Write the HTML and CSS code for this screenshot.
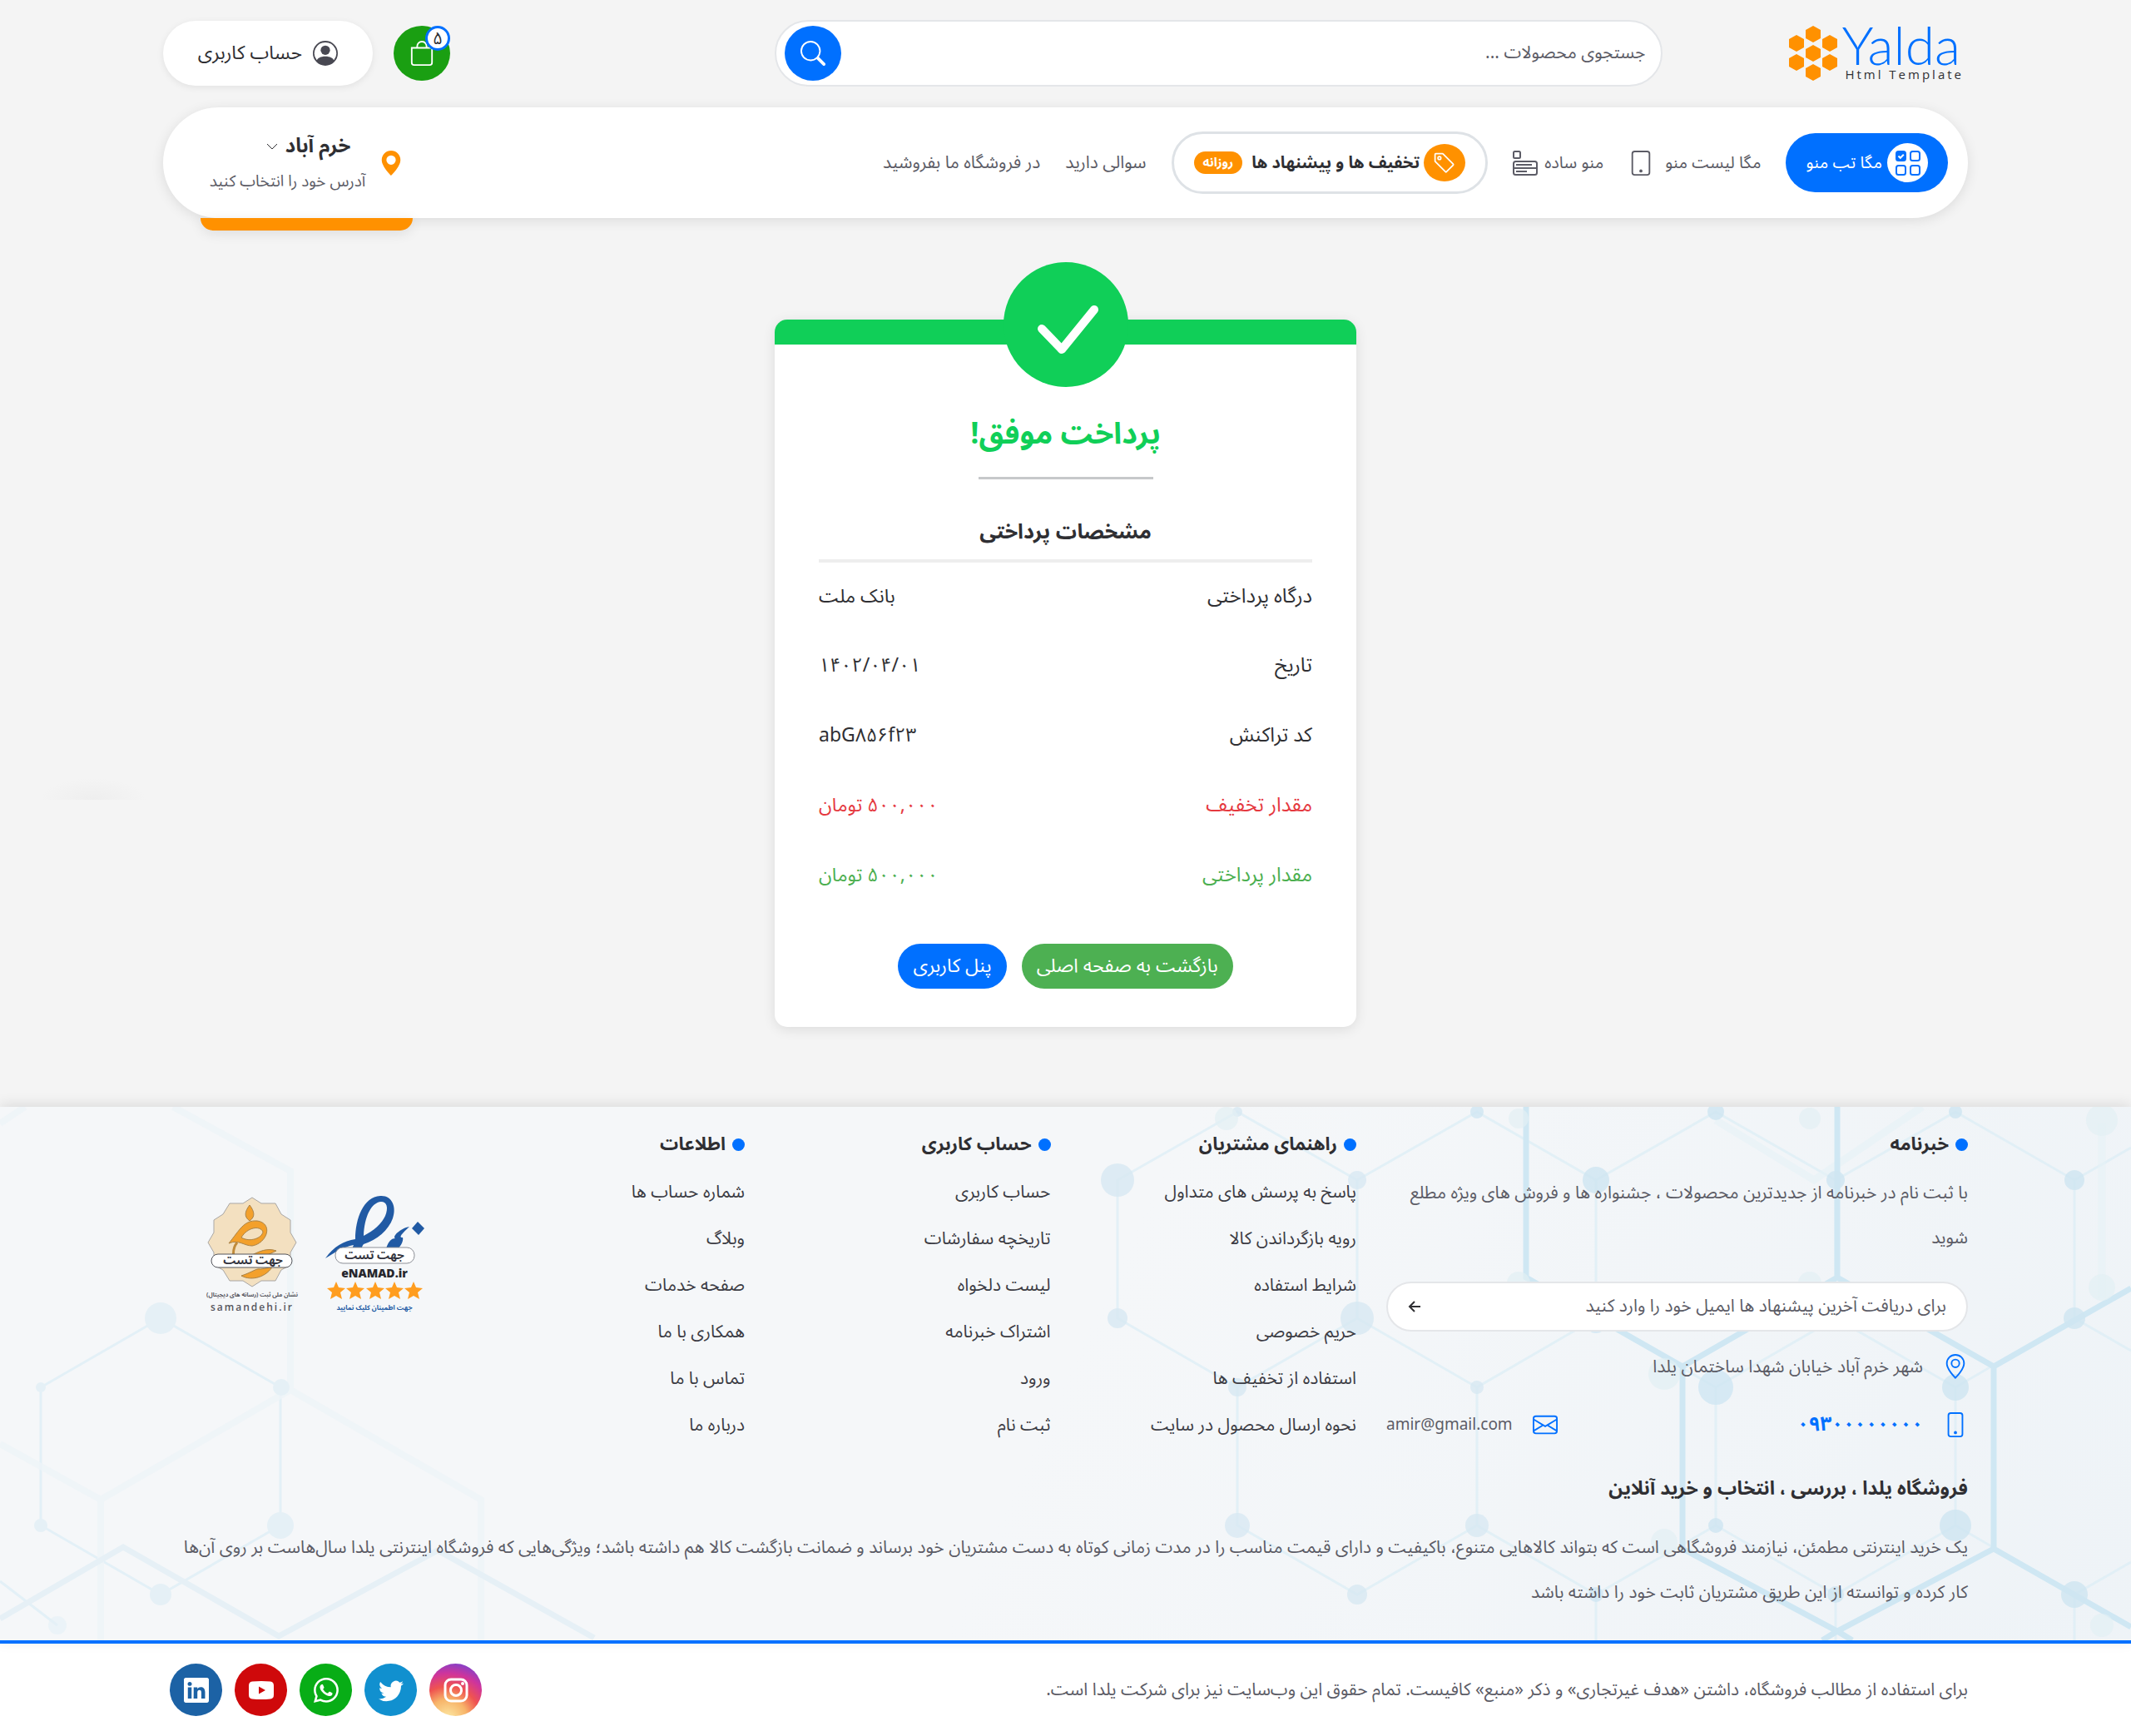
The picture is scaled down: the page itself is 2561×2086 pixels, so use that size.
FILE: index.html
```html
<!DOCTYPE html>
<html lang="fa" dir="rtl">
<head>
<meta charset="utf-8">
<meta name="viewport" content="width=device-width, initial-scale=1">
<title>یلدا | پرداخت موفق</title>
<link rel="stylesheet" href="styles.css">
</head>
<body>
<header class="container">
  <div class="topbar">
    <div class="cell cell-2">
      <a class="logo" href="#" dir="ltr" aria-label="Yalda Html Template">
        <svg class="logo-mark" viewBox="0 0 58 66" aria-hidden="true">
          <defs><path id="hex" d="M0-10 9-5V5L0 10-9 5V-5Z"/></defs>
          <g fill="#ff9100">
            <use href="#hex" x="29" y="10"/><use href="#hex" x="29" y="33"/><use href="#hex" x="29" y="56"/>
            <use href="#hex" x="9" y="21"/><use href="#hex" x="9" y="44"/>
            <use href="#hex" x="49" y="21"/><use href="#hex" x="49" y="44"/>
          </g>
        </svg>
        <span class="logo-text"><span class="logo-name">Yalda</span><span class="logo-sub">Html Template</span></span>
      </a>
    </div>
    <div class="cell cell-6">
      <form class="search">
        <input class="search-input" type="search" placeholder="جستجوی محصولات ..." aria-label="جستجوی محصولات">
        <button class="search-button" type="button" aria-label="جستجو">
          <svg class="icon-lg" viewBox="0 0 16 16"><path d="M11.742 10.344a6.5 6.5 0 1 0-1.397 1.398h-.001q.044.06.098.115l3.85 3.85a1 1 0 0 0 1.415-1.414l-3.85-3.85a1 1 0 0 0-.115-.1zM12 6.5a5.5 5.5 0 1 1-11 0 5.5 5.5 0 0 1 11 0"/></svg>
        </button>
      </form>
    </div>
    <div class="cell cell-4 account-tools">
      <a class="cart" href="#" aria-label="سبد خرید">
        <svg class="icon-lg" viewBox="0 0 16 16"><path d="M8 1a2.500 2.500 0 0 1 2.500 2.500V4h-5v-.5A2.500 2.500 0 0 1 8 1m3.500 3v-.5a3.500 3.500 0 1 0-7 0V4H1v10a2 2 0 0 0 2 2h10a2 2 0 0 0 2-2V4zM2 5h12v9a1 1 0 0 1-1 1H3a1 1 0 0 1-1-1z"/></svg>
        <span class="cart-count">۵</span>
      </a>
      <a class="account" href="#">
        <svg class="icon-lg" viewBox="0 0 16 16"><path d="M11 6a3 3 0 1 1-6 0 3 3 0 0 1 6 0"/><path fill-rule="evenodd" d="M0 8a8 8 0 1 1 16 0A8 8 0 0 1 0 8m8-7a7 7 0 0 0-5.468 11.370C3.242 11.226 4.805 10 8 10s4.757 1.225 5.468 2.370A7 7 0 0 0 8 1"/></svg>
        <span>حساب کاربری</span>
      </a>
    </div>
  </div>

  <div class="cell">
    <nav class="mainnav" aria-label="منوی اصلی">
      <ul class="menu">
        <li><a class="mega-tab" href="#">
          <span class="mega-icon"><svg class="icon-lg" viewBox="0 0 30 30"><g fill="none" stroke="#0070ff" stroke-width="2"><rect x="1" y="1" width="11" height="11" rx="2.500" fill="#0070ff"/><rect x="18" y="1" width="11" height="11" rx="2.500"/><rect x="1" y="18" width="11" height="11" rx="2.500"/><rect x="18" y="18" width="11" height="11" rx="2.500"/><path d="m3.500 6.500 2.300 2.300 4-4" stroke="#fff"/></g></svg></span>
          مگا تب منو</a></li>
        <li><a class="menu-link menu-link-icon" href="#">مگا لیست منو
          <svg class="icon-lg" viewBox="0 0 16 16"><path d="M12 1a1 1 0 0 1 1 1v12a1 1 0 0 1-1 1H4a1 1 0 0 1-1-1V2a1 1 0 0 1 1-1zM4 0a2 2 0 0 0-2 2v12a2 2 0 0 0 2 2h8a2 2 0 0 0 2-2V2a2 2 0 0 0-2-2z"/><path d="M8 14a1 1 0 1 0 0-2 1 1 0 0 0 0 2"/></svg></a></li>
        <li><a class="menu-link menu-link-icon menu-link-tight" href="#">منو ساده
          <svg class="icon-lg" viewBox="0 0 30 30"><g fill="none" stroke="currentColor" stroke-width="2"><rect x="1" y="1" width="8" height="8" rx="1.500"/><rect x="1" y="13" width="28" height="16" rx="2.500"/><path d="M4 17h19M1 21h28M4 25h13"/></g></svg></a></li>
        <li><a class="offers" href="#">
          <span class="offers-icon"><svg class="icon-md" viewBox="0 0 16 16"><path d="M6 4.500a1.500 1.500 0 1 1-3 0 1.500 1.500 0 0 1 3 0m-1 0a.5.5 0 1 0-1 0 .5.5 0 0 0 1 0"/><path d="M2 1h4.586a1 1 0 0 1 .707.293l7 7a1 1 0 0 1 0 1.414l-4.586 4.586a1 1 0 0 1-1.414 0l-7-7A1 1 0 0 1 1 6.586V2a1 1 0 0 1 1-1m0 5.586 7 7L13.586 9l-7-7H2z"/></svg></span>
          <span>تخفیف ها و پیشنهاد ها</span>
          <span class="offers-badge">روزانه</span></a></li>
        <li><a class="menu-link" href="#">سوالی دارید</a></li>
        <li><a class="menu-link" href="#">در فروشگاه ما بفروشید</a></li>
      </ul>
      <button class="location" type="button">
        <svg class="icon-lg location-pin" viewBox="0 0 16 16"><path d="M8 16s6-5.686 6-10A6 6 0 0 0 2 6c0 4.314 6 10 6 10m0-7a3 3 0 1 1 0-6 3 3 0 0 1 0 6"/></svg>
        <span class="location-text">
          <span class="location-city">خرم آباد <svg class="icon-xs" viewBox="0 0 14 8"><path d="m1 1 6 6 6-6" fill="none" stroke="currentColor"/></svg></span>
          <span class="location-hint">آدرس خود را انتخاب کنید</span>
        </span>
      </button>
    </nav>
  </div>
</header>

<main class="container main">
  <section class="receipt">
    <div class="receipt-mark"><svg viewBox="0 0 150 150" aria-hidden="true"><path d="m46 80 24 25 39-48" fill="none" stroke="#fff" stroke-width="10" stroke-linecap="round" stroke-linejoin="round"/></svg></div>
    <h1 class="receipt-title">پرداخت موفق!</h1>
    <hr class="receipt-divider">
    <h2 class="receipt-subtitle">مشخصات پرداختی</h2>
    <table class="receipt-table">
      <tr><th scope="row">درگاه پرداختی</th><td>بانک ملت</td></tr>
      <tr><th scope="row">تاریخ</th><td>۱۴۰۲/۰۴/۰۱</td></tr>
      <tr><th scope="row">کد تراکنش</th><td dir="ltr">abG۸۵۶f۲۳</td></tr>
      <tr class="discount"><th scope="row">مقدار تخفیف</th><td>۵۰۰,۰۰۰ تومان</td></tr>
      <tr class="paid"><th scope="row">مقدار پرداختی</th><td>۵۰۰,۰۰۰ تومان</td></tr>
    </table>
    <div class="receipt-actions">
      <a class="btn btn-green" href="#">بازگشت به صفحه اصلی</a>
      <a class="btn btn-blue" href="#">پنل کاربری</a>
    </div>
  </section>
</main>

<footer class="footer">
  <div class="footer-body">
    <svg class="footer-pattern" viewBox="0 0 2561 641" preserveAspectRatio="xMaxYMin slice" aria-hidden="true">
      <g fill="none" stroke="#dcedf5" stroke-width="3" opacity=".75">
        <path d="M1487 6 1343 88V254L1487 337 1631 254V88ZM1487 337V503L1631 586 1775 503V337L1631 254M1631 88 1775 6 1918 88 2062 6 2206 88 2350 6 2493 88V254L2350 337V503L2493 586V641M1918 88V254L1775 337M1918 254 2062 337 2206 254 2350 337M2062 337V503L1918 586 1775 503M1918 586V641M2062 503 2206 586 2350 503M2206 586V641M2493 88 2561 49M2493 254 2561 293M2493 586 2561 547M2206 88V205"/>
        <path d="M193 254 49 337V503L193 586 337 503V337ZM0 570 69 623"/>
      </g>
      <path d="M2062 16 2180 88 2310 0M2526 20V230" fill="none" stroke="#e6f2f6" stroke-width="9" opacity=".6"/>
      <path d="M208 0 349 77V340L121 472 0 405M121 472V641M349 340 578 472V641M0 20 30 0" fill="none" stroke="#edf4f7" stroke-width="8" opacity=".8"/>
      <path d="M0 615 148 529 335 636 526 533 714 638" fill="none" stroke="#e6f0f6" stroke-width="7"/>
      <path d="M1834 0V205L2022 312 2208 205V0M2208 205 2396 312V531L2208 630 2022 531V312M2396 312 2561 218M2396 531 2561 625M2208 630 2190 641M2208 630 2226 641" fill="none" stroke="#cfe7f3" stroke-width="7"/>
      <g fill="#cfe6f2" opacity=".8">
        <circle cx="1775" cy="6" r="8"/><circle cx="2062" cy="6" r="10"/><circle cx="2350" cy="6" r="8"/><circle cx="1918" cy="88" r="16"/><circle cx="2206" cy="88" r="11"/><circle cx="2493" cy="88" r="12"/><circle cx="2493" cy="254" r="13"/><circle cx="1918" cy="260" r="12"/><circle cx="2062" cy="337" r="21"/><circle cx="2350" cy="337" r="16"/><circle cx="2062" cy="503" r="9"/><circle cx="2350" cy="503" r="19"/><circle cx="1918" cy="586" r="9"/><circle cx="2206" cy="586" r="10"/><circle cx="2493" cy="586" r="16"/>
      </g>
      <g fill="#d8e9f3" opacity=".8">
        <circle cx="1487" cy="6" r="6"/><circle cx="1343" cy="88" r="20"/><circle cx="1631" cy="88" r="11"/><circle cx="1343" cy="254" r="12"/><circle cx="1631" cy="254" r="20"/><circle cx="1487" cy="337" r="11"/><circle cx="1775" cy="337" r="8"/><circle cx="1487" cy="503" r="15"/><circle cx="1775" cy="503" r="14"/><circle cx="1631" cy="586" r="12"/>
      </g>
      <g fill="#e5f0f6">
        <circle cx="193" cy="254" r="19"/><circle cx="49" cy="337" r="6"/><circle cx="338" cy="337" r="10"/><circle cx="49" cy="503" r="8"/><circle cx="337" cy="503" r="16"/><circle cx="193" cy="586" r="13"/><circle cx="69" cy="623" r="11" opacity=".6"/>
      </g>
      <g fill="#e2f0f4" opacity=".7">
        <circle cx="1474" cy="14" r="14"/><circle cx="1825" cy="14" r="12"/><circle cx="2175" cy="14" r="13"/><circle cx="2526" cy="16" r="19"/><circle cx="1825" cy="212" r="14"/><circle cx="2175" cy="212" r="14"/><circle cx="2526" cy="217" r="16"/><circle cx="2000" cy="321" r="19"/><circle cx="2000" cy="523" r="16"/><circle cx="2526" cy="623" r="14"/>
      </g>
    </svg>
    <div class="container">
      <div class="footer-cols">
        <section class="cell cell-4">
          <h3 class="footer-title">خبرنامه</h3>
          <p class="footer-text">با ثبت نام در خبرنامه از جدیدترین محصولات ، جشنواره ها و فروش های ویژه مطلع شوید</p>
          <form class="newsletter">
            <input class="newsletter-input" type="email" placeholder="برای دریافت آخرین پیشنهاد ها ایمیل خود را وارد کنید" aria-label="ایمیل">
            <button class="newsletter-button" type="button" aria-label="ارسال"><svg class="icon-sm" viewBox="0 0 16 16"><path d="M15 8H2m6-6L2 8l6 6" fill="none" stroke="currentColor" stroke-width="2"/></svg></button>
          </form>
          <div class="contact">
            <svg class="icon-lg" viewBox="0 0 16 16"><path d="M12.166 8.940c-.524 1.062-1.234 2.120-1.960 3.070A32 32 0 0 1 8 14.580a32 32 0 0 1-2.206-2.570c-.726-.95-1.436-2.008-1.960-3.070C3.304 7.867 3 6.862 3 6a5 5 0 0 1 10 0c0 .862-.305 1.867-.834 2.940M8 16s6-5.686 6-10A6 6 0 0 0 2 6c0 4.314 6 10 6 10"/><path d="M8 8a2 2 0 1 1 0-4 2 2 0 0 1 0 4m0 1a3 3 0 1 0 0-6 3 3 0 0 0 0 6"/></svg>
            <span>شهر خرم آباد خیابان شهدا ساختمان یلدا</span>
          </div>
          <div class="contact-row">
            <a class="contact contact-phone" href="#">
              <svg class="icon-lg" viewBox="0 0 16 16"><path d="M11 1a1 1 0 0 1 1 1v12a1 1 0 0 1-1 1H5a1 1 0 0 1-1-1V2a1 1 0 0 1 1-1zM5 0a2 2 0 0 0-2 2v12a2 2 0 0 0 2 2h6a2 2 0 0 0 2-2V2a2 2 0 0 0-2-2z"/><path d="M8 14a1 1 0 1 0 0-2 1 1 0 0 0 0 2"/></svg>
              <span>۰۹۳۰۰۰۰۰۰۰۰</span></a>
            <a class="contact contact-mail" href="#">
              <svg class="icon-lg" viewBox="0 0 16 16"><path d="M0 4a2 2 0 0 1 2-2h12a2 2 0 0 1 2 2v8a2 2 0 0 1-2 2H2a2 2 0 0 1-2-2zm2-1a1 1 0 0 0-1 1v.217l7 4.200 7-4.200V4a1 1 0 0 0-1-1zm13 2.383-4.708 2.825L15 11.105zm-.034 6.876-5.640-3.471L8 9.583l-1.326-.795-5.640 3.470A1 1 0 0 0 2 13h12a1 1 0 0 0 .966-.741M1 11.105l4.708-2.897L1 5.383z"/></svg>
              <span>amir@gmail.com</span></a>
          </div>
        </section>
        <section class="cell cell-2">
          <h3 class="footer-title">راهنمای مشتریان</h3>
          <ul class="footer-links">
            <li><a href="#">پاسخ به پرسش های متداول</a></li><li><a href="#">رویه بازگرداندن کالا</a></li><li><a href="#">شرایط استفاده</a></li><li><a href="#">حریم خصوصی</a></li><li><a href="#">استفاده از تخفیف ها</a></li><li><a href="#">نحوه ارسال محصول در سایت</a></li>
          </ul>
        </section>
        <section class="cell cell-2">
          <h3 class="footer-title">حساب کاربری</h3>
          <ul class="footer-links">
            <li><a href="#">حساب کاربری</a></li><li><a href="#">تاریخچه سفارشات</a></li><li><a href="#">لیست دلخواه</a></li><li><a href="#">اشتراک خبرنامه</a></li><li><a href="#">ورود</a></li><li><a href="#">ثبت نام</a></li>
          </ul>
        </section>
        <section class="cell cell-2">
          <h3 class="footer-title">اطلاعات</h3>
          <ul class="footer-links">
            <li><a href="#">شماره حساب ها</a></li><li><a href="#">وبلاگ</a></li><li><a href="#">صفحه خدمات</a></li><li><a href="#">همکاری با ما</a></li><li><a href="#">تماس با ما</a></li><li><a href="#">درباره ما</a></li>
          </ul>
        </section>
        <section class="cell cell-2 trust">
          <a href="#" aria-label="eNAMAD.ir">
            <svg class="trust-logo" viewBox="0 0 120 150" direction="rtl">
              <path d="M0 76C10 62 22 55 36 53 36 28 46 2 66 1 80 0 86 14 81 28 76 42 62 54 46 59 43 62 44 66 45 70H31C32 66 33 62 34 60 22 62 10 70 0 76ZM46 49C58 43 68 34 72 25 76 15 74 8 67 8 55 9 47 26 46 49Z" fill="#215aa4" fill-rule="evenodd"/>
              <path d="m111 32 8 8-7 8-8-8zM101 38C90 40 80 50 84 52 76 52 73 64 73 66H86C92 60 94 54 93 51 89 51 89 49 101 38Z" fill="#215aa4"/>
              <rect x="12" y="63" width="95" height="19" rx="9" fill="#fff" stroke="#8d9097"/>
              <g text-anchor="middle">
                <text class="stamp-text" x="59" y="77">جهت تست</text>
                <text class="enamad-name" x="59" y="99" direction="ltr">eNAMAD.ir</text>
                <text class="enamad-hint" x="59" y="138">جهت اطمینان کلیک نمایید</text>
              </g>
              <defs><path id="star" d="m0-11 3 7 8 1-6 5 2 8-7-4-7 4 2-8-6-5 8-1z"/></defs>
              <g fill="#ff9d1f"><use href="#star" x="13" y="115"/><use href="#star" x="36" y="115"/><use href="#star" x="60" y="115"/><use href="#star" x="83" y="115"/><use href="#star" x="106" y="115"/></g>
            </svg>
          </a>
          <a href="#" aria-label="samandehi.ir">
            <svg class="trust-logo" viewBox="0 0 120 150" direction="rtl">
              <path d="m60 3 11 7h17l7 13 11 7v15l7 12-7 12v15l-11 6-7 13H71l-11 7-11-7H33l-8-13-11-6V69L7 57l7-12V30l11-7 8-13h16z" fill="#f3e0c0" stroke="#a9a7a5"/>
              <path d="M57 12C51 20 50 26 57 31 64 26 63 20 57 12ZM32 58C45 42 50 30 66 31 86 34 78 58 60 61 50 61 44 53 32 58ZM47 51C57 57 72 52 73 44 69 36 54 39 47 51ZM47 97C62 92 64 88 70 89 78 88 83 86 85 85 78 98 60 104 47 97ZM60 72C68 68 78 63 89 67L74 74Z" fill="#f3a02b" fill-rule="evenodd" stroke="#a98247" stroke-width="1"/>
              <path d="M42 57C36 64 36 76 42 84" fill="none" stroke="#c08a3a" stroke-width="3"/>
              <rect x="11" y="71" width="97" height="16" rx="8" fill="#fff" stroke="#55565c"/>
              <g text-anchor="middle">
                <text class="stamp-text" x="61" y="83">جهت تست</text>
                <text class="samandehi-hint" x="60" y="122">نشان ملی ثبت (رسانه های دیجیتال)</text>
                <text class="samandehi-name" x="60" y="139" direction="ltr">samandehi.ir</text>
              </g>
            </svg>
          </a>
        </section>
      </div>
      <section class="cell about">
        <h2 class="about-title">فروشگاه یلدا ، بررسی ، انتخاب و خرید آنلاین</h2>
        <p class="footer-text">یک خرید اینترنتی مطمئن، نیازمند فروشگاهی است که بتواند کالاهایی متنوع، باکیفیت و دارای قیمت مناسب را در مدت زمانی کوتاه به دست مشتریان خود برساند و ضمانت بازگشت کالا هم داشته باشد؛ ویژگی‌هایی که فروشگاه اینترنتی یلدا سال‌هاست بر روی آن‌ها کار کرده و توانسته از این طریق مشتریان ثابت خود را داشته باشد</p>
      </section>
    </div>
  </div>
  <div class="footer-bottom">
    <div class="container">
      <div class="cell footer-bar">
        <p class="copyright">برای استفاده از مطالب فروشگاه، داشتن «هدف غیرتجاری» و ذکر «منبع» کافیست. تمام حقوق این وب‌سایت نیز برای شرکت یلدا است.</p>
        <div class="social">
          <a class="instagram" href="#" aria-label="Instagram"><svg class="icon-lg" viewBox="0 0 30 30"><g fill="none" stroke="#fff" stroke-width="3"><rect x="2" y="2" width="26" height="26" rx="7"/><circle cx="15" cy="15" r="6.500"/></g><circle cx="23" cy="7" r="2"/></svg></a>
          <a class="twitter" href="#" aria-label="Twitter"><svg class="icon-lg" viewBox="0 0 16 16"><path d="M5.026 15c6.038 0 9.341-5.003 9.341-9.334q.002-.211-.006-.422A6.700 6.700 0 0 0 16 3.542a6.700 6.700 0 0 1-1.889.518 3.300 3.300 0 0 0 1.447-1.817 6.500 6.500 0 0 1-2.087.793A3.286 3.286 0 0 0 7.875 6.030a9.320 9.320 0 0 1-6.767-3.429 3.290 3.290 0 0 0 1.018 4.382A3.300 3.300 0 0 1 .64 6.575v.045a3.290 3.290 0 0 0 2.632 3.218 3.200 3.200 0 0 1-.865.115 3 3 0 0 1-.614-.057 3.280 3.280 0 0 0 3.067 2.277A6.600 6.600 0 0 1 .78 13.580a6 6 0 0 1-.78-.045A9.340 9.340 0 0 0 5.026 15"/></svg></a>
          <a class="whatsapp" href="#" aria-label="WhatsApp"><svg class="icon-lg" viewBox="0 0 16 16"><path d="M13.601 2.326A7.850 7.850 0 0 0 7.994 0C3.627 0 .068 3.558.064 7.926c0 1.399.366 2.760 1.057 3.965L0 16l4.204-1.102a7.900 7.900 0 0 0 3.790.965h.004c4.368 0 7.926-3.558 7.930-7.930A7.900 7.900 0 0 0 13.600 2.326zM7.994 14.521a6.600 6.600 0 0 1-3.356-.92l-.24-.144-2.494.654.666-2.433-.156-.251a6.560 6.560 0 0 1-1.007-3.505c0-3.626 2.957-6.584 6.591-6.584a6.560 6.560 0 0 1 4.660 1.931 6.560 6.560 0 0 1 1.928 4.660c-.004 3.639-2.961 6.592-6.592 6.592m3.615-4.934c-.197-.099-1.170-.578-1.353-.646-.182-.065-.315-.099-.445.099-.133.197-.513.646-.627.775-.114.133-.232.148-.43.05-.197-.1-.836-.308-1.592-.985-.59-.525-.985-1.175-1.103-1.372-.114-.198-.011-.304.088-.403.087-.088.197-.232.296-.346.1-.114.133-.198.198-.33.065-.134.034-.248-.015-.347-.05-.099-.445-1.076-.612-1.470-.16-.389-.323-.335-.445-.34-.114-.007-.247-.007-.38-.007a.73.73 0 0 0-.529.247c-.182.198-.691.677-.691 1.654s.71 1.916.81 2.049c.098.133 1.394 2.132 3.383 2.992.47.205.84.326 1.129.418.475.152.904.129 1.246.08.38-.058 1.171-.48 1.338-.943.164-.464.164-.86.114-.943-.049-.084-.182-.133-.38-.232"/></svg></a>
          <a class="youtube" href="#" aria-label="YouTube"><svg class="icon-lg" viewBox="0 0 30 30"><path fill-rule="evenodd" d="M4 4.500Q15 3.500 26 4.500q4 .5 4 5v11q0 4.500-4 5-11 1-22 0-4-.5-4-5v-11q0-4.500 4-5M12 10.500v9l8-4.500z"/></svg></a>
          <a class="linkedin" href="#" aria-label="LinkedIn"><svg class="icon-lg" viewBox="0 0 16 16"><path d="M0 1.146C0 .513.526 0 1.175 0h13.650C15.474 0 16 .513 16 1.146v13.708c0 .633-.526 1.146-1.175 1.146H1.175C.526 16 0 15.487 0 14.854zm4.943 12.248V6.169H2.542v7.225zm-1.200-8.212c.837 0 1.358-.554 1.358-1.248-.015-.709-.52-1.248-1.342-1.248S2.400 3.226 2.400 3.934c0 .694.521 1.248 1.327 1.248zm4.908 8.212V9.359c0-.216.016-.432.08-.586.173-.431.568-.878 1.232-.878.869 0 1.216.662 1.216 1.634v3.865h2.401V9.250c0-2.220-1.184-3.252-2.764-3.252-1.274 0-1.845.7-2.165 1.193v.025h-.016l.016-.025V6.169h-2.400c.03.678 0 7.225 0 7.225z"/></svg></a>
        </div>
      </div>
    </div>
  </div>
</footer>
</body>
</html>
```
FILE: styles.css
```css
:root {
  --blue: #0070ff;
  --orange: #ff9100;
  --green: #10cf58;
  --dark: #2f2f33;
  --muted: #5c5c66;
  --shadow: 0 3px 15px rgba(0, 0, 0, .1);
}

* { box-sizing: border-box; }

body {
  margin: 0;
  background: #f4f4f4 radial-gradient(64px 26px at 50% 100%, #eeeeee, #f4f4f4) 48px 935px / 128px 26px no-repeat;
  color: var(--dark);
  font-family: "Noto Sans Arabic", "Noto Sans", "DejaVu Sans", sans-serif;
  font-size: 21px;
  line-height: 1.5;
}

a { color: inherit; text-decoration: none; }
ul { list-style: none; margin: 0; padding: 0; }
h1, h2, h3, p { margin: 0; }
button, input { font: inherit; color: inherit; }
button { border: 0; padding: 0; background: none; cursor: pointer; }
svg { display: block; fill: currentColor; flex: none; }

.icon-lg { width: 30px; height: 30px; }
.icon-md { width: 28px; height: 28px; }
.icon-sm { width: 16px; height: 16px; }
.icon-xs { width: 16px; height: 8px; }

/* grid: twelve columns, 18px gutters on each side */
.container { padding: 0 178px; }
.cell { padding: 0 18px; min-width: 0; }
.topbar, .footer-cols { display: grid; grid-template-columns: repeat(12, 1fr); }
.cell-2 { grid-column: span 2; }
.cell-4 { grid-column: span 4; }
.cell-6 { grid-column: span 6; }

/* header */
.topbar { padding: 24px 0 25px; align-items: center; }
.logo { display: flex; align-items: center; gap: 5px; width: max-content; height: 66px; padding-right: 5px; }
.logo-mark { width: 58px; height: 66px; }
.logo-text { display: flex; flex-direction: column; }
.logo-name { color: var(--blue); font: 300 64px/50px Lato, sans-serif; }
.logo-sub { padding-left: 4px; font: 15px/20px "Open Sans", sans-serif; letter-spacing: 3px; }

.search {
  display: flex;
  align-items: center;
  height: 80px;
  padding: 0 16px 0 10px;
  background: #fff;
  border: 2px solid #e4e6e9;
  border-radius: 40px;
}
.search-input { flex: 1; min-width: 0; border: 0; outline: 0; background: none; }
.search-input::placeholder, .newsletter-input::placeholder { color: var(--muted); opacity: 1; }
.search-button {
  display: grid;
  place-items: center;
  width: 68px;
  height: 66px;
  border-radius: 50%;
  background: var(--blue);
  color: #fff;
}

.account-tools { display: flex; justify-content: flex-end; align-items: center; gap: 25px; }
.cart {
  position: relative;
  display: grid;
  place-items: center;
  width: 68px;
  height: 66px;
  border-radius: 50%;
  background: #1a9f12;
  color: #fff;
}
.cart-count {
  position: absolute;
  top: 0;
  right: 0;
  width: 30px;
  height: 30px;
  border: 3px solid var(--blue);
  border-radius: 50%;
  background: #fff;
  color: var(--dark);
  text-align: center;
  line-height: 24px;
}
.account {
  display: flex;
  align-items: center;
  justify-content: center;
  gap: 13px;
  width: 252px;
  height: 78px;
  border-radius: 39px;
  background: #fff;
  box-shadow: 0 2px 8px rgba(0, 0, 0, .08);
  font-size: 23px;
}
.account svg { color: #484852; }

.mainnav {
  display: flex;
  justify-content: space-between;
  align-items: center;
  height: 133px;
  padding: 0 24px 0 45px;
  border-radius: 67px;
  background: #fff;
  box-shadow: var(--shadow);
}
.menu { display: flex; align-items: center; gap: 30px; color: var(--muted); }
.menu-link { display: flex; align-items: center; gap: 14px; }
.menu-link-icon { font-size: 20px; }
.menu-link-tight { gap: 8px; }
.mega-tab {
  display: flex;
  align-items: center;
  gap: 6px;
  height: 71px;
  padding: 0 24px;
  border-radius: 36px;
  background: var(--blue);
  color: #fff;
  font-size: 20px;
}
.mega-icon { display: grid; place-items: center; width: 49px; height: 47px; border-radius: 50%; background: #fff; }
.offers {
  display: flex;
  align-items: center;
  gap: 5px;
  height: 75px;
  padding: 0 24px;
  border: 3px solid #dee2e6;
  border-radius: 38px;
  color: var(--dark);
  font-size: 20px;
  font-weight: 700;
}
.offers-icon { display: grid; place-items: center; width: 50px; height: 45px; border-radius: 50%; background: var(--orange); color: #fff; }
.offers-badge { margin-right: 6px; padding: 0 11px; border-radius: 14px; background: var(--orange); color: #fff; font-size: 15px; line-height: 27px; }

.location {
  position: relative;
  display: flex;
  align-items: center;
  justify-content: center;
  gap: 16px;
  width: 255px;
  height: 133px;
  text-align: right;
}
.location::after {
  content: "";
  position: absolute;
  inset: 100% 0 auto;
  height: 15px;
  border-radius: 0 0 15px 15px;
  background: var(--orange);
  box-shadow: var(--shadow);
}
.location-pin { color: var(--orange); }
.location-text { display: flex; flex-direction: column; gap: 10px; }
.location-city { display: flex; align-items: center; gap: 8px; padding-right: 18px; font-size: 24px; font-weight: 700; }
.location-hint { color: var(--muted); font-size: 19px; }

/* receipt */
.main { display: flex; justify-content: center; padding-top: 122px; padding-bottom: 96px; }
.receipt {
  display: flex;
  flex-direction: column;
  align-items: center;
  width: calc(100% / 3 - 36px);
  padding: 0 53px 46px;
  border-top: 30px solid var(--green);
  border-radius: 15px;
  background: #fff;
  box-shadow: var(--shadow);
}
.receipt-mark { width: 150px; height: 150px; margin-top: -99px; border-radius: 50%; background: var(--green); }
.receipt-title { margin-top: 30px; color: var(--green); font-size: 36px; line-height: 54px; }
.receipt-divider { width: 210px; height: 3px; margin: 24px 0 0; border: 0; background: #c6c8ca; }
.receipt-subtitle { margin-top: 41px; font-size: 25px; line-height: 44px; }
.receipt-table { width: 100%; margin-top: 11px; border-collapse: collapse; border-top: 4px solid #eee; font-size: 23px; }
.receipt-table tr { height: 84px; }
.receipt-table th { padding: 0; font-size: 24px; font-weight: 400; text-align: right; }
.receipt-table td { padding: 0; text-align: left; }
.discount { color: #e5393f; }
.paid { color: #4caf50; }
.receipt-actions { display: flex; gap: 18px; margin-top: 40px; }
.btn { padding: 0 18px; border-radius: 27px; color: #fff; font-size: 23px; line-height: 54px; }
.btn-green { background: #4db052; }
.btn-blue { background: var(--blue); }

/* footer */
.footer-body {
  position: relative;
  padding: 22px 0 31px;
  border-bottom: 4px solid var(--blue);
  background: linear-gradient(115deg, #f5f7f9 50%, #eef3f7);
  box-shadow: 0 -3px 15px rgba(0, 0, 0, .1);
}
.footer-pattern { position: absolute; inset: 0; width: 100%; height: 100%; }
.footer-body .container { position: relative; }
.footer-title { display: flex; align-items: center; gap: 8px; font-size: 22px; line-height: 46px; }
.footer-title::before { content: ""; width: 15px; height: 15px; border-radius: 50%; background: var(--blue); }
.footer-text { color: var(--muted); line-height: 54px; }
.footer-cols .footer-text { margin-top: 8px; }
.footer-links { margin-top: 6px; color: #3c3c44; line-height: 56px; }

.newsletter {
  display: flex;
  align-items: center;
  height: 60px;
  margin-top: 26px;
  padding: 0 24px;
  border: 2px solid #e4e6e9;
  border-radius: 30px;
  background: #fff;
}
.newsletter-input { flex: 1; min-width: 0; padding: 0; border: 0; outline: 0; background: none; text-align: right; }
.contact { display: flex; align-items: center; gap: 24px; color: var(--muted); line-height: 30px; }
.contact svg { color: var(--blue); }
div.contact { margin-top: 27px; }
.contact-row { display: flex; justify-content: space-between; margin-top: 40px; }
.contact-phone { color: var(--blue); font-size: 24px; font-weight: 700; }
.contact-mail { font-size: 19px; }
.trust { display: flex; justify-content: flex-end; gap: 28px; padding-top: 84px; padding-left: 65px; }
.trust-logo { width: 120px; height: 150px; }
.stamp-text { font-size: 14px; font-weight: 700; fill: #33333d; }
.enamad-name { font: 800 14px "Open Sans", sans-serif; fill: #26262c; }
.enamad-hint { font-size: 8px; font-weight: 700; fill: #215aa4; }
.samandehi-hint { font-size: 7px; font-weight: 700; fill: #55555d; }
.samandehi-name { font: 600 12px "Open Sans", sans-serif; letter-spacing: 2px; fill: #55555d; }
.about { padding-top: 24px; }
.about-title { margin-bottom: 18px; font-size: 23px; line-height: 50px; }

.footer-bottom { padding: 24px 0; background: #fff; }
.footer-bar { display: flex; align-items: center; justify-content: space-between; }
.copyright { color: var(--muted); }
.social { display: flex; gap: 15px; padding-left: 8px; color: #fff; }
.social a { display: grid; place-items: center; width: 63px; height: 63px; border-radius: 50%; }
.instagram { background: radial-gradient(circle at 35% 105%, #fbdc96 8%, #f7b469 30%, #ef5350 50%, #cf349b 70%, #7a42cf 90%, #3b5bfb); }
.twitter { background: #1190cf; }
.whatsapp { background: #08ad16; }
.youtube { background: #cf090b; }
.linkedin { background: #1c62a5; }
```
